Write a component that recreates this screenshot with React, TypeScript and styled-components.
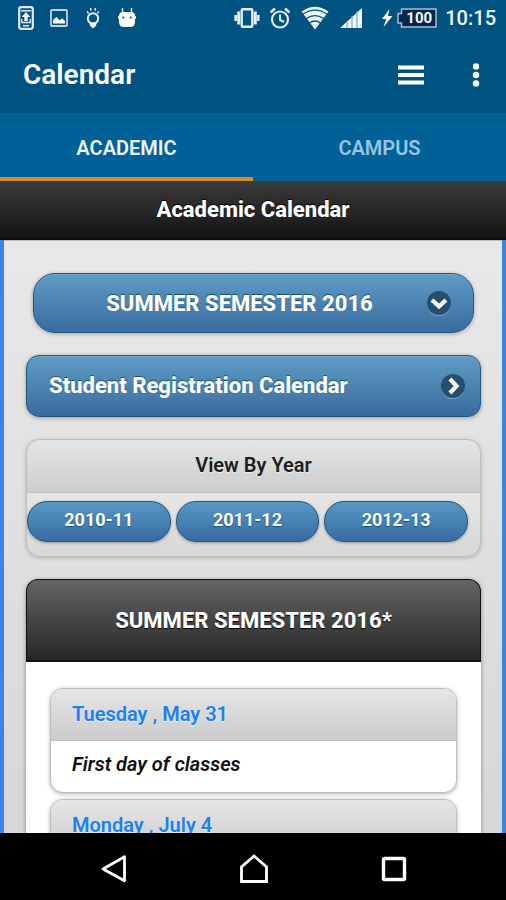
import React, { useState } from "react";
import styled, { createGlobalStyle } from "styled-components";

const GlobalStyle = createGlobalStyle`
  *, *::before, *::after { box-sizing: border-box; }
  body { margin: 0; font-family: Roboto, "Liberation Sans", sans-serif; }
  h1, h2, h3, p { margin: 0; }
  button, select { font-family: inherit; }
`;

const Screen = styled.div`
  display: flex;
  flex-direction: column;
  height: 100vh;
  overflow: hidden;
  background: #000;
`;

const StatusBar = styled.div`
  display: flex;
  flex: none;
  justify-content: space-between;
  height: 36px;
  padding: 0 10px 0 18px;
  background: #005381;
  color: #f1f6fc;
`;

const StatusGroup = styled.div<{ $gap: number }>`
  display: flex;
  align-items: center;
  gap: ${(p) => p.$gap}px;
`;

const Battery = styled.span`
  display: flex;
  align-items: center;
  justify-content: center;
  position: relative;
  width: 40px;
  height: 20px;
  padding-left: 4px;
  font-size: 15px;
  font-weight: 700;
  line-height: 20px;

  svg {
    position: absolute;
    inset: 0;
  }

  span {
    position: relative;
  }
`;

const Clock = styled.time`
  font-size: 20px;
  font-weight: 500;
  line-height: 36px;
`;

const AppBar = styled.header`
  display: flex;
  flex: none;
  align-items: center;
  height: 77px;
  padding: 0 20px 0 23px;
  background: #005381;
  color: #fff;
`;

const AppTitle = styled.h1`
  flex: 1;
  font-size: 28px;
  font-weight: 600;
  line-height: 32px;
`;

const IconButton = styled.button`
  display: flex;
  align-items: center;
  justify-content: center;
  height: 48px;
  padding: 0 6px;
  border: 0;
  background: none;
  color: #fff;
  cursor: pointer;
`;

const AppActions = styled.div`
  display: flex;
  gap: 36px;
`;

const Tabs = styled.div`
  display: grid;
  flex: none;
  grid-template-columns: 1fr 1fr;
  height: 68px;
  background: #006098;
`;

const Tab = styled.button<{ $active: boolean }>`
  padding: 5px 0 0;
  border: 0;
  border-bottom: 4px solid ${(p) => (p.$active ? "#e08a1e" : "transparent")};
  background: none;
  color: ${(p) => (p.$active ? "#eef5ff" : "#94c4e8")};
  font-size: 20px;
  font-weight: 600;
  line-height: 24px;
  cursor: pointer;
`;

const PageHeading = styled.h2`
  flex: none;
  height: 59px;
  border-bottom: 2px solid #0c0c0c;
  background: linear-gradient(#3b3b3b, #141414);
  color: #fff;
  font-size: 22px;
  font-weight: 800;
  line-height: 58px;
  text-align: center;
  text-shadow: 0 -1px 1px #000;
`;

const Content = styled.main`
  display: flex;
  flex: 1;
  flex-direction: column;
  min-height: 0;
  overflow: hidden;
  padding: 33px 21px 0 22px;
  border: solid #3f83e2;
  border-width: 0 4px;
  background: linear-gradient(#e8e8e8, #d7d7d7);
  box-shadow: inset 0 1px 0 #bbb;
`;

const SemesterPicker = styled.label`
  position: relative;
  display: block;
  flex: none;
  margin: 0 7px 22px;

  svg {
    position: absolute;
    top: 17px;
    right: 22px;
    pointer-events: none;
  }
`;

const SemesterSelect = styled.select`
  appearance: none;
  display: block;
  width: 100%;
  height: 60px;
  padding: 0 28px 0 0;
  border: 1px solid #20557c;
  border-radius: 22px;
  background: linear-gradient(#5f9cc5, #396b9e);
  box-shadow: 0 1px 4px rgba(0, 0, 0, 0.3), inset 0 1px 0 rgba(255, 255, 255, 0.15);
  color: #fff;
  font-size: 22px;
  font-weight: 800;
  text-align: center;
  text-align-last: center;
  text-shadow: 0 -1px 1px #145072;
`;

const RegistrationLink = styled.a`
  display: flex;
  flex: none;
  align-items: center;
  justify-content: space-between;
  height: 62px;
  margin-bottom: 22px;
  padding: 0 14px 0 22px;
  border: 1px solid #20557c;
  border-radius: 13px;
  background: linear-gradient(#5f9cc5, #396b9e);
  box-shadow: 0 1px 4px rgba(0, 0, 0, 0.3), inset 0 1px 0 rgba(255, 255, 255, 0.15);
  color: #fff;
  font-size: 22px;
  font-weight: 800;
  line-height: 28px;
  text-decoration: none;
  text-shadow: 0 -1px 1px #145072;
`;

const YearPanel = styled.section`
  flex: none;
  height: 118px;
  margin-bottom: 22px;
  overflow: hidden;
  border: 1px solid #bdbdbd;
  border-radius: 14px;
  background: linear-gradient(#e6e6e6, #cbcbcb) 0 53px no-repeat, #cbcbcb;
  box-shadow: 0 1px 4px rgba(0, 0, 0, 0.2);
`;

const YearHeading = styled.h3`
  height: 53px;
  border-bottom: 1px solid #c2c2c2;
  background: linear-gradient(#e5e5e5, #cdcdcd);
  color: #1d1d1d;
  font-size: 20px;
  font-weight: 600;
  line-height: 50px;
  text-align: center;
  text-shadow: 0 1px 0 #eee;
`;

const YearList = styled.div`
  display: grid;
  grid-template-columns: repeat(3, 1fr);
  gap: 5px;
  padding: 8px 12px 14px 0;
`;

const YearButton = styled.button`
  height: 41px;
  padding: 0 0 4px;
  border: 1px solid #20557c;
  border-radius: 20px;
  background: linear-gradient(#5798c5, #376ba2);
  box-shadow: 0 1px 3px rgba(0, 0, 0, 0.3);
  color: #fff;
  font-size: 18px;
  font-weight: 700;
  text-shadow: 0 1px 1px #145072;
  cursor: pointer;
`;

const SemesterPanel = styled.section`
  flex: 1 0 auto;
  border-radius: 12px 12px 0 0;
  background: #fff;
  box-shadow: 0 1px 4px rgba(0, 0, 0, 0.4);
`;

const SemesterHeading = styled.h2`
  height: 83px;
  border: 1px solid #111;
  border-bottom-width: 2px;
  border-radius: 12px 12px 0 0;
  background: linear-gradient(#646464, #272727);
  color: #fff;
  font-size: 22px;
  font-weight: 800;
  line-height: 82px;
  text-align: center;
  text-shadow: 0 1px 1px #000;
`;

const EventList = styled.div`
  display: flex;
  flex-direction: column;
  gap: 6px;
  padding: 26px 24px 0;
`;

const EventCard = styled.article`
  overflow: hidden;
  border: 1px solid #bdbdbd;
  border-radius: 13px;
  background: #fff;
  box-shadow: 0 1px 4px rgba(0, 0, 0, 0.3);
`;

const EventDate = styled.h3`
  height: 52px;
  padding: 0 21px;
  border-bottom: 1px solid #c4c4c4;
  background: linear-gradient(#e6e6e6, #cbcbcb);
  color: #1981f1;
  font-size: 20px;
  font-weight: 600;
  line-height: 50px;
  text-shadow: 0 1px 0 #eee;
`;

const EventText = styled.p`
  height: 51px;
  padding: 0 21px;
  color: #111;
  font-size: 20px;
  font-style: italic;
  font-weight: 600;
  line-height: 46px;
`;

const NavBar = styled.nav`
  display: flex;
  flex: none;
  align-items: center;
  justify-content: center;
  gap: 100px;
  height: 67px;
  padding: 4px 0 0 2px;
  background: #000;
`;

const NavButton = styled.button`
  display: flex;
  align-items: center;
  justify-content: center;
  width: 40px;
  height: 40px;
  padding: 0;
  border: 0;
  background: none;
  color: #fff;
  cursor: pointer;
`;

const PhoneUpdateIcon = () => (
  <svg width="16" height="24" viewBox="0 0 16 24" fill="none" stroke="#dfe9f5">
    <rect x="1.2" y="1.2" width="13.6" height="21.6" rx="2" strokeWidth="2.2" />
    <path d="M3 4.700h10M5 19.800h6" strokeWidth="1.400" />
    <path d="M8 6 12.300 11H9.700V15H6.300V11H3.700Z" fill="#fff" stroke="none" />
    <path d="M3.800 13v3.500h8.400V13" strokeWidth="1.300" />
  </svg>
);

const PictureIcon = () => (
  <svg width="18" height="18" viewBox="0 0 18 18" fill="none">
    <rect x="1" y="1" width="16" height="16" rx="1" stroke="#bfd2e4" strokeWidth="1.8" />
    <path d="M3 14.500V11l3.500-3 3 3.200L12.500 9.500 15 12v2.500Z" fill="#fff" />
  </svg>
);

const BulbIcon = () => (
  <svg width="18" height="22" viewBox="0 0 18 22" fill="none" stroke="#e4edf7">
    <circle cx="9" cy="11.500" r="5.200" strokeWidth="2" />
    <path d="M3 4.500 4.600 6.300M6.500 1l.6 2.600M11.500 1l-.6 2.600M15 4.500 13.400 6.300" strokeWidth="1.500" />
    <path d="M5.800 15.500h6.400v3L9 21.500 5.800 18.500Z" fill="#fff" stroke="none" />
  </svg>
);

const DroidIcon = () => (
  <svg width="18" height="22" viewBox="0 0 18 22">
    <path d="M4.500 1v5M13.500 1v5" stroke="#e4edf7" strokeWidth="1.400" />
    <path d="M1 9q0-4 4-4h8q4 0 4 4v5.500q0 5.500-5 5.500H6q-5 0-5-5.500Z" fill="#fff" />
    <path d="M0 10.500h18" stroke="#fff" strokeWidth="2.500" />
    <circle cx="5.300" cy="10.500" r="1.100" fill="#005381" />
    <circle cx="12.700" cy="10.500" r="1.100" fill="#005381" />
  </svg>
);

const VibrateIcon = () => (
  <svg width="28" height="22" viewBox="0 0 28 22" fill="none" stroke="#e4edf7">
    <rect x="8.700" y="2.200" width="10.600" height="17.600" rx="1" strokeWidth="2.400" />
    <path d="M5.700 4.500v13M22.300 4.500v13" strokeWidth="3" />
    <path d="M2.700 8v6M25.300 8v6" strokeWidth="2.600" />
  </svg>
);

const AlarmIcon = () => (
  <svg width="22" height="24" viewBox="0 0 22 24" fill="none" stroke="#e4edf7">
    <circle cx="11" cy="13.500" r="8" strokeWidth="2.200" />
    <path d="M11 8.500v5.500l4 2" strokeWidth="2" />
    <path d="M1.500 6.500 6 2.500M20.500 6.500 16 2.500" strokeWidth="2.400" />
  </svg>
);

const WifiIcon = () => (
  <svg width="32" height="24" viewBox="0 0 32 24">
    <path d="M2.500 5.500Q16-4 29.500 5.500L16 23.500Z" fill="#eef5fc" />
    <path d="M3.800 8.300Q16 0 28.200 8.300M7 12.700Q16 6.500 25 12.700M10.500 17Q16 13 21.500 17" fill="none" stroke="#005381" strokeWidth="1.300" />
  </svg>
);

const SignalIcon = () => (
  <svg width="24" height="22" viewBox="0 0 24 22">
    <path d="M1 21 23 1v20Z" fill="#eef5fc" />
    <path d="M8 14v7M13 9v12M18 4v17" stroke="#7fa8c4" strokeWidth="1.200" />
  </svg>
);

const BoltIcon = () => (
  <svg width="12" height="18" viewBox="0 0 12 18">
    <path d="M8.500 0 1 10h4.200L2.500 18 11.500 7H7Z" fill="#fff" />
  </svg>
);

const BatteryShell = () => (
  <svg width="40" height="20" viewBox="0 0 40 20">
    <path d="M4.500 1H39v18H4.500v-4H1V5.500h3.500Z" fill="#06264a" stroke="#a9bfd3" strokeWidth="1.500" />
  </svg>
);

const MenuIcon = () => (
  <svg width="26" height="20" viewBox="0 0 26 20">
    <path d="M0 2.500h26M0 10h26M0 17.500h26" stroke="currentColor" strokeWidth="4" />
  </svg>
);

const MoreIcon = () => (
  <svg width="8" height="24" viewBox="0 0 8 24" fill="currentColor">
    <circle cx="4" cy="3.500" r="3.200" />
    <circle cx="4" cy="12" r="3.200" />
    <circle cx="4" cy="20.500" r="3.200" />
  </svg>
);

const DiscArrow = ({ path }: { path: string }) => (
  <svg width="26" height="26" viewBox="0 0 26 26" fill="none" aria-hidden="true">
    <circle cx="13" cy="14" r="12" fill="#78a5c9" />
    <circle cx="13" cy="13" r="12" fill="#264e6e" />
    <path d={path} stroke="#fff" strokeWidth="4.200" />
  </svg>
);

const BackIcon = () => (
  <svg width="28" height="30" viewBox="0 0 28 30" fill="none">
    <path d="M24.500 2.800v24L3 15Z" stroke="currentColor" strokeWidth="2.800" strokeLinejoin="round" />
  </svg>
);

const HomeIcon = () => (
  <svg width="30" height="30" viewBox="0 0 30 30" fill="none">
    <path d="M2.500 27.500V13L15 2l12.500 11v14.500Z" stroke="currentColor" strokeWidth="2.800" />
  </svg>
);

const RecentIcon = () => (
  <svg width="26" height="26" viewBox="0 0 26 26" fill="none">
    <rect x="2.500" y="2.500" width="21" height="21" rx="1" stroke="currentColor" strokeWidth="3.400" />
  </svg>
);

const tabs = ["ACADEMIC", "CAMPUS"];
const years = ["2010-11", "2011-12", "2012-13"];
const events = [
  { date: "Tuesday , May 31", text: "First day of classes" },
  { date: "Monday , July 4", text: "" },
];

export default function App() {
  const [active, setActive] = useState(tabs[0]);

  return (
    <Screen>
      <GlobalStyle />
      <StatusBar>
        <StatusGroup $gap={16}>
          <PhoneUpdateIcon />
          <PictureIcon />
          <BulbIcon />
          <DroidIcon />
        </StatusGroup>
        <StatusGroup $gap={8}>
          <StatusGroup $gap={18}>
            <StatusGroup $gap={8}>
              <VibrateIcon />
              <AlarmIcon />
              <WifiIcon />
              <SignalIcon />
            </StatusGroup>
            <StatusGroup $gap={4}>
              <BoltIcon />
              <Battery>
                <BatteryShell />
                <span>100</span>
              </Battery>
            </StatusGroup>
          </StatusGroup>
          <Clock>10:15</Clock>
        </StatusGroup>
      </StatusBar>
      <AppBar>
        <AppTitle>Calendar</AppTitle>
        <AppActions>
          <IconButton aria-label="Menu">
            <MenuIcon />
          </IconButton>
          <IconButton aria-label="More options">
            <MoreIcon />
          </IconButton>
        </AppActions>
      </AppBar>
      <Tabs role="tablist">
        {tabs.map((tab) => (
          <Tab
            key={tab}
            role="tab"
            aria-selected={tab === active}
            $active={tab === active}
            onClick={() => setActive(tab)}
          >
            {tab}
          </Tab>
        ))}
      </Tabs>
      <PageHeading>Academic Calendar</PageHeading>
      <Content>
        <SemesterPicker>
          <SemesterSelect aria-label="Semester">
            <option>SUMMER SEMESTER 2016</option>
          </SemesterSelect>
          <DiscArrow path="M6 10l7 6.500L20 10" />
        </SemesterPicker>
        <RegistrationLink href="#registration">
          Student Registration Calendar
          <DiscArrow path="M10 6l6.500 7L10 20" />
        </RegistrationLink>
        <YearPanel>
          <YearHeading>View By Year</YearHeading>
          <YearList>
            {years.map((year) => (
              <YearButton key={year}>{year}</YearButton>
            ))}
          </YearList>
        </YearPanel>
        <SemesterPanel>
          <SemesterHeading>SUMMER SEMESTER 2016*</SemesterHeading>
          <EventList>
            {events.map((event) => (
              <EventCard key={event.date}>
                <EventDate>{event.date}</EventDate>
                <EventText>{event.text}</EventText>
              </EventCard>
            ))}
          </EventList>
        </SemesterPanel>
      </Content>
      <NavBar>
        <NavButton aria-label="Back">
          <BackIcon />
        </NavButton>
        <NavButton aria-label="Home">
          <HomeIcon />
        </NavButton>
        <NavButton aria-label="Recent apps">
          <RecentIcon />
        </NavButton>
      </NavBar>
    </Screen>
  );
}
